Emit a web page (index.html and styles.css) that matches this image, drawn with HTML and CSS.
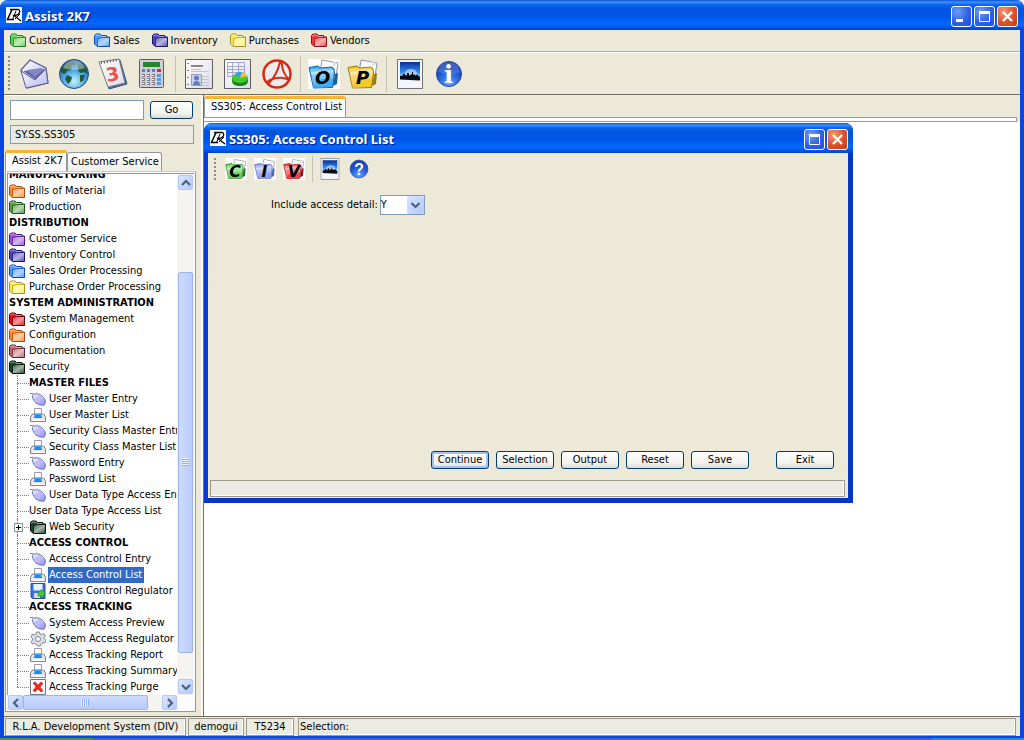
FILE: index.html
```html
<!DOCTYPE html>
<html lang="en">
<head>
<meta charset="utf-8">
<title>Assist 2K7</title>
<link rel="stylesheet" href="styles.css">
</head>
<body>
<svg class="defs" aria-hidden="true">
  <defs>
    <linearGradient id="g-shine" x1="0" y1="0" x2="1" y2="1"><stop offset="0" stop-color="#fff" stop-opacity=".2"/><stop offset=".5" stop-color="#fff" stop-opacity=".6"/><stop offset="1" stop-color="#fff" stop-opacity=".1"/></linearGradient>
    <linearGradient id="g-face" x1="0" y1="0" x2="0" y2="1"><stop offset="0" stop-color="#fff" stop-opacity=".55"/><stop offset="1" stop-color="#fff" stop-opacity=".1"/></linearGradient>
    <linearGradient id="g-mouse" x1="0" y1="0" x2="1" y2="1"><stop offset="0" stop-color="#f0f0ff"/><stop offset="1" stop-color="#8d8cf0"/></linearGradient>
    <linearGradient id="g-mail" x1="0" y1="0" x2="1" y2="1"><stop offset="0" stop-color="#fff"/><stop offset="1" stop-color="#b4b6ec"/></linearGradient>
    <linearGradient id="g-sky" x1="0" y1="0" x2="0" y2="1"><stop offset="0" stop-color="#0a2f98"/><stop offset=".55" stop-color="#2f86e8"/><stop offset="1" stop-color="#e2f4ff"/></linearGradient>
    <radialGradient id="g-sea" cx=".5" cy=".75" r=".75"><stop offset="0" stop-color="#c4f4ff"/><stop offset=".5" stop-color="#4aa4e4"/><stop offset="1" stop-color="#154f98"/></radialGradient>
    <radialGradient id="g-orb" cx=".5" cy=".9" r=".9"><stop offset="0" stop-color="#5fa2ff"/><stop offset=".6" stop-color="#1c55d0"/><stop offset="1" stop-color="#1a3fa8"/></radialGradient>
    <linearGradient id="g-paper" x1="0" y1="0" x2="1" y2="1"><stop offset="0" stop-color="#fff"/><stop offset="1" stop-color="#dcdce6"/></linearGradient>
  </defs>
  <symbol id="folder" viewBox="0 0 16 14">
    <path d="M.5 11V2.500L2 1h4l1.500 1.500h5l1 1.500h2v9.500h-12z" fill="var(--c)" stroke="var(--d)"/>
    <path d="M1.500 3.500l1-1.500h3L7 3.500h5" fill="none" stroke="#fff" opacity=".5"/>
    <path d="M4 5h11v8H4z" fill="url(#g-shine)"/>
    <path d="M3.500 12.500v-7l2 0 1.500-1h7" fill="none" stroke="var(--d)" stroke-width=".8" opacity=".8"/>
  </symbol>
  <symbol id="logo" viewBox="0 0 16 16">
    <path fill="#fff" d="M0 0h16v16H0z"/>
    <path d="M6 2.500L1.500 12.500H8" fill="none" stroke="#000" stroke-width="1.500"/>
    <path d="M4 2.500h8.500q2.500 1.500 0 4.500-1.500 1.500-4.500 1.500l7 5.500" fill="none" stroke="#000" stroke-width="1.300"/>
    <path d="M10 4L6.500 12.500M9 12l5-5" fill="none" stroke="#000"/>
  </symbol>
  <symbol id="mouse" viewBox="0 0 16 16">
    <path d="M0 2.500h3l2 2" fill="none" stroke="#85858f"/>
    <path d="M3 3.500c4-2 8 0 10.500 3 2.500 2.500 2.500 5.500 .5 7.500-3 1-8-1-10-4.500C2.500 7 1.500 5 3 3.500z" fill="url(#g-mouse)" stroke="#6f70a8"/>
    <path d="M4 8c2 .5 5-1 5.500-4.500" fill="none" stroke="#a3a4d4" stroke-width=".7"/>
  </symbol>
  <symbol id="printer" viewBox="0 0 16 16">
    <path d="M4.500 8V1.500h7V8" fill="#fff" stroke="#9a9aa4"/>
    <path d="M2.500 7h11l2 3v4.500H.500V10z" fill="#e2e2e4" stroke="#85858c"/>
    <path d="M5 6h6l1 5H4z" fill="#2089ee"/><path d="M5 6h6l.5 1.500h-7z" fill="#70c0ff"/>
    <path d="M2 12.500h12v1.500H2z" fill="#fff"/>
  </symbol>
  <symbol id="disk" viewBox="0 0 16 16">
    <path d="M1 .5h14v15H2.500L1 14z" fill="#456fd0" stroke="#2c4d9c"/>
    <path d="M3.500 1h9v6.500h-9z" fill="#dff4ff"/><path d="M4 10h6v5H4z" fill="#d4d8e0"/>
    <path d="M8 10q0-2 3-2V6.500l4.500 4-4.500 4V13h-3z" fill="#45c92c" stroke="#2b8b22" stroke-width=".6"/>
  </symbol>
  <symbol id="gear" viewBox="0 0 16 16">
    <path d="M6.500 1h3l.5 2 2 .5 2-1 1.500 2.500-1.500 1.500.5 1.500 1.500 1-1 3-2.500-.2-1.500 1.700-.5 1.500h-3L6.500 13.500l-2-1-2 .5L1 10.500 2.500 9V7.500L1 6l1.500-3 2 .8 1.500-.8z" fill="#dcdce4" stroke="#858591"/>
    <circle cx="8" cy="8" r="2.500" fill="#fff" stroke="#858591"/>
  </symbol>
  <symbol id="purge" viewBox="0 0 16 16">
    <path d="M.5.5h15v15H.5z" fill="#fff" stroke="#72727c"/>
    <path d="M3 4l2-1 3 3 3-3 2 1.500L10 8l3 3.500-2 1.500-3-3-3 3-2-1.500L6 8z" fill="#ee2e20" stroke="#b01610" stroke-width=".6"/>
  </symbol>
  <symbol id="photo" viewBox="0 0 26 30">
    <path d="M.5.5h25v29H.5z" fill="#f4f4fb" stroke="#6f6f78"/>
    <path d="M3 3h20v17.500H3z" fill="url(#g-sky)"/>
    <ellipse cx="14" cy="14" rx="6" ry="4" fill="#fff" opacity=".5"/>
    <path d="M3 20.500V17l3-.5V15h2v1.500l2-.5v-2h2v2.500l3-1.500v-2h1v3l2-1v1.500l3-1v1.500l2 .5v4z" fill="#050b14"/>
  </symbol>
  <symbol id="paperfolder" viewBox="0 0 32 30">
    <path d="M14 1l16 3-3 20-16-4z" fill="#fff" stroke="#8d95a3"/><path d="M25 2.500l5 2-5 3z" fill="#dde3ea"/>
    <path d="M1 8.500l9-1.500 2 2 12-1 2 2 .5 4-2 14.500-19 .5z" fill="var(--c)" stroke="var(--d)"/>
    <path d="M2 10l22-1 1 4-22 3z" fill="#fff" opacity=".35"/>
    <path d="M3 13l23-2-2.500 17-18.500 1z" fill="url(#g-face)"/>
    <path d="M25 27l2-12 3-1-1 11z" fill="var(--d)"/>
    <path d="M5 29q4-12 20-9l-1 8z" fill="var(--c)" opacity=".7"/>
  </symbol>
  <symbol id="chev" viewBox="0 0 10 8"><path d="M1 2l4 4 4-4" fill="none" stroke="#4d6185" stroke-width="2.200"/></symbol>
  <symbol id="x" viewBox="0 0 21 21"><path d="M6 6l9 9M15 6l-9 9" stroke="#fff" stroke-width="2.300"/></symbol>
  <symbol id="max" viewBox="0 0 21 21"><path d="M5.500 6v9.500h10V6z" fill="none" stroke="#fff"/><path d="M5 5h11v3H5z" fill="#fff"/></symbol>
  <symbol id="min" viewBox="0 0 21 21"><path d="M5 13h7v3H5z" fill="#fff"/></symbol>
</svg>

<div class="window">
  <header class="titlebar">
    <svg class="i16"><use href="#logo"/></svg><h1 class="title">Assist 2K7</h1>
    <button class="wbtn" aria-label="Minimize"><svg><use href="#min"/></svg></button>
    <button class="wbtn" aria-label="Maximize"><svg><use href="#max"/></svg></button>
    <button class="wbtn close" aria-label="Close"><svg><use href="#x"/></svg></button>
  </header>

  <nav class="menubar">
    <a href="#customers"><svg class="folder green"><use href="#folder"/></svg>Customers</a>
    <a href="#sales"><svg class="folder blue"><use href="#folder"/></svg>Sales</a>
    <a href="#inventory"><svg class="folder indigo"><use href="#folder"/></svg>Inventory</a>
    <a href="#purchases"><svg class="folder yellow"><use href="#folder"/></svg>Purchases</a>
    <a href="#vendors"><svg class="folder red"><use href="#folder"/></svg>Vendors</a>
  </nav>

  <div class="toolbar">
    <span class="grip"></span>
    <button aria-label="Mail"><svg viewBox="0 0 32 32"><path d="M2 12L11 2l16 8 2 15-21 5z" fill="url(#g-mail)" stroke="#5b5c96" stroke-width="1.200"/><path d="M4 13l22-2-9 11z" fill="#6668a8"/><path d="M8 12l14-2 3 1-9 8z" fill="#8587c4"/><path d="M2 13l14 9L27 11l2 14-22 5z" fill="url(#g-mail)" stroke="#5b5c96"/></svg></button>
    <button aria-label="Web"><svg viewBox="0 0 32 32"><circle cx="16" cy="16" r="14.500" fill="url(#g-sea)" stroke="#244a78"/><path d="M4 10q5-7 11-7l3 3-4 2-1 4-4 1-2 3-3-1-2-2zM20 5l6 2q3 4 4 9l-4-2-4 1-2-3zM9 17l5 2-1 4-3 3-3-5zM22 17l5 0-2 6-3 1z" fill="#22593c"/><path d="M5 10Q9 2 16 2t11 8Q16 14 5 10z" fill="#fff" opacity=".4"/></svg></button>
    <button aria-label="Calendar"><svg viewBox="0 0 32 32"><path d="M4 5l19-3 7 24-18 5z" fill="#3e6fae" stroke="#3c5a80"/><path d="M2 4l20-3 6 24-17 4z" fill="url(#g-paper)" stroke="#777784"/><path d="M4 5l17-3" stroke="#555" stroke-width="2" stroke-dasharray="1 2"/><text class="cal" x="9" y="23" transform="rotate(-10 16 16)">3</text></svg></button>
    <button aria-label="Calculator"><svg viewBox="0 0 32 32"><rect x="3.500" y="1.500" width="24" height="28" rx="1" fill="#cfcfda" stroke="#5c5c66"/><path d="M7 4h17v5H7z" fill="#23862c"/><path d="M6 12.500h14" stroke="#7473bb" stroke-width="3" stroke-dasharray="3 2"/><path d="M21 11h4v3h-4z" fill="#d02a36"/><path d="M6 17.500h14M6 21.500h14M6 25.500h14" stroke="#7c7c88" stroke-width="3" stroke-dasharray="3 2"/><path d="M6 17.500h14M6 21.500h14M6 25.500h14" stroke="#f4f4f8" stroke-dasharray="2 3"/><path d="M23 16v11" stroke="#5b96d8" stroke-width="4" stroke-dasharray="3 1"/></svg></button>
    <span class="sep"></span>
    <button aria-label="Contacts"><svg viewBox="0 0 32 32"><path d="M2.500 1.500h27v29h-27z" fill="url(#g-paper)" stroke="#5c5c66"/><path d="M5 5v24" stroke="#888" stroke-width="2" stroke-dasharray="1 6"/><path d="M8 8h12" stroke="#666" stroke-width="1.500"/><path d="M8 11.500h10M8 13.500h18M19 18.500h7M19 21.500h7M19 24.500h7M19 27.500h7" stroke="#c4c4ce"/><path d="M8.500 16.500h10v11h-10z" fill="#c8d2f0" stroke="#9a98b8"/><circle cx="13.500" cy="20" r="2.500" fill="#657bc0"/><path d="M10 27q0-4 3.500-4t3.500 4z" fill="#657bc0"/></svg></button>
    <button aria-label="Reports"><svg viewBox="0 0 32 32"><path d="M2.500 1.500h26v29h-26z" fill="url(#g-paper)" stroke="#5c5c66"/><path d="M5.500 4.500h17v14h-17zM10.500 4v15M16.500 4v15M5 8.500h18M5 11.500h18M5 14.500h18" fill="none" stroke="#a4a5d4"/><path d="M10 20v3q0 5 8 5t8-5v-3z" fill="#17861b"/><ellipse cx="18" cy="20" rx="8" ry="5" fill="#42c92e"/><path d="M18 20l-5-4q4-3 7-2z" fill="#389bed"/><path d="M18 20l2-6q4 1 5 4z" fill="#f0c52e"/></svg></button>
    <button aria-label="PDF"><svg viewBox="0 0 32 32"><circle cx="16" cy="16" r="13.500" fill="#ecebed" stroke="#d52c16" stroke-width="2.500"/><path d="M8 25Q16 17 19 4q1-2 1.500 0 1 12 7.500 17 1 2-2 0-8-3-17 1-4 2-1 3z" fill="none" stroke="#db2b15" stroke-width="2"/></svg></button>
    <span class="sep"></span>
    <button class="hot" aria-label="Orders"><svg class="cyan" viewBox="0 0 32 30"><use href="#paperfolder"/><text class="let" x="7" y="25">O</text></svg></button>
    <button aria-label="Purchases"><svg class="gold" viewBox="0 0 32 30"><use href="#paperfolder"/><text class="let" x="9" y="25">P</text></svg></button>
    <span class="sep"></span>
    <button aria-label="Picture"><svg viewBox="0 0 26 30"><use href="#photo"/></svg></button>
    <button aria-label="Information"><svg viewBox="0 0 32 32"><circle cx="16" cy="16" r="12.500" fill="url(#g-orb)" stroke="#2445a0"/><path d="M5 14Q6 4 16 4t11 10q-10 5-22 0z" fill="#fff" opacity=".15"/><text class="info" x="11" y="25">i</text></svg></button>
  </div>

  <div class="main">
    <aside class="side">
      <form class="go"><input type="text" aria-label="Go to program"><button type="button" class="btn">Go</button></form>
      <input class="path" type="text" value="SY.SS.SS305" aria-label="Current program" readonly>
      <div class="tabs"><button class="tab on">Assist 2K7</button><button class="tab">Customer Service</button></div>
      <div class="panel">
        <div class="tree-row">
          <ul class="tree">
            <li class="hd">MANUFACTURING</li>
            <li><svg class="folder orange"><use href="#folder"/></svg>Bills of Material</li>
            <li><svg class="folder moss"><use href="#folder"/></svg>Production</li>
            <li class="hd">DISTRIBUTION</li>
            <li><svg class="folder purple"><use href="#folder"/></svg>Customer Service</li>
            <li><svg class="folder indigo"><use href="#folder"/></svg>Inventory Control</li>
            <li><svg class="folder blue"><use href="#folder"/></svg>Sales Order Processing</li>
            <li><svg class="folder yellow"><use href="#folder"/></svg>Purchase Order Processing</li>
            <li class="hd">SYSTEM ADMINISTRATION</li>
            <li><svg class="folder crimson"><use href="#folder"/></svg>System Management</li>
            <li><svg class="folder orange"><use href="#folder"/></svg>Configuration</li>
            <li><svg class="folder rose"><use href="#folder"/></svg>Documentation</li>
            <li><svg class="folder dark"><use href="#folder"/></svg>Security</li>
            <li class="sub hd">MASTER FILES</li>
            <li class="sub"><svg class="i16"><use href="#mouse"/></svg>User Master Entry</li>
            <li class="sub"><svg class="i16"><use href="#printer"/></svg>User Master List</li>
            <li class="sub"><svg class="i16"><use href="#mouse"/></svg>Security Class Master Entry</li>
            <li class="sub"><svg class="i16"><use href="#printer"/></svg>Security Class Master List</li>
            <li class="sub"><svg class="i16"><use href="#mouse"/></svg>Password Entry</li>
            <li class="sub"><svg class="i16"><use href="#printer"/></svg>Password List</li>
            <li class="sub"><svg class="i16"><use href="#mouse"/></svg>User Data Type Access Entry</li>
            <li class="sub">User Data Type Access List</li>
            <li class="sub"><button class="plus" aria-label="Expand Web Security"><svg viewBox="0 0 9 9"><path d="M.5.5h8v8h-8z" fill="#fff" stroke="#7b8ea8"/><path d="M2 4.500h5M4.500 2v5" stroke="#000"/></svg></button><svg class="folder dark"><use href="#folder"/></svg>Web Security</li>
            <li class="sub hd">ACCESS CONTROL</li>
            <li class="sub"><svg class="i16"><use href="#mouse"/></svg>Access Control Entry</li>
            <li class="sub"><svg class="i16"><use href="#printer"/></svg><span class="sel">Access Control List</span></li>
            <li class="sub"><svg class="i16"><use href="#disk"/></svg>Access Control Regulator</li>
            <li class="sub hd">ACCESS TRACKING</li>
            <li class="sub"><svg class="i16"><use href="#mouse"/></svg>System Access Preview</li>
            <li class="sub"><svg class="i16"><use href="#gear"/></svg>System Access Regulator</li>
            <li class="sub"><svg class="i16"><use href="#printer"/></svg>Access Tracking Report</li>
            <li class="sub"><svg class="i16"><use href="#printer"/></svg>Access Tracking Summary</li>
            <li class="sub last"><svg class="i16"><use href="#purge"/></svg>Access Tracking Purge</li>
          </ul>
          <div class="vbar"><button class="arr up" aria-label="Scroll up"><svg><use href="#chev"/></svg></button><span class="vspace"></span><span class="thumb"><i></i></span><span class="vrest"></span><button class="arr" aria-label="Scroll down"><svg><use href="#chev"/></svg></button></div>
        </div>
        <div class="hbar"><button class="arr left" aria-label="Scroll left"><svg><use href="#chev"/></svg></button><span class="thumb"><i></i></span><span class="hrest"></span><button class="arr right" aria-label="Scroll right"><svg><use href="#chev"/></svg></button></div>
      </div>
    </aside>

    <section class="work">
      <div class="tabs"><button class="tab on">SS305: Access Control List</button></div>
      <div class="strip"></div>
      <div class="desk">
        <section class="dialog">
          <header class="titlebar inner">
            <svg class="i16"><use href="#logo"/></svg><h2 class="title">SS305: Access Control List</h2>
            <button class="wbtn" aria-label="Maximize dialog"><svg><use href="#max"/></svg></button>
            <button class="wbtn close" aria-label="Close dialog"><svg><use href="#x"/></svg></button>
          </header>
          <div class="body">
            <div class="toolbar small">
              <span class="grip"></span>
              <button class="hot" aria-label="Customers"><svg class="green" viewBox="0 0 32 30"><use href="#paperfolder"/><text class="let big" x="6" y="27">C</text></svg></button>
              <button class="hot" aria-label="Inventory"><svg class="lilac" viewBox="0 0 32 30"><use href="#paperfolder"/><text class="let big" x="11" y="27">I</text></svg></button>
              <button class="hot" aria-label="Vendors"><svg class="red" viewBox="0 0 32 30"><use href="#paperfolder"/><text class="let big" x="7" y="27">V</text></svg></button>
              <span class="sep"></span>
              <button aria-label="Picture"><svg viewBox="0 0 26 30"><use href="#photo"/></svg></button>
              <button aria-label="Help"><svg viewBox="0 0 32 32"><circle cx="16" cy="16" r="13" fill="url(#g-orb)" stroke="#2445a0"/><text class="help" x="9" y="24">?</text></svg></button>
            </div>
            <div class="field">
              <label for="detail">Include access detail:</label>
              <span class="combo"><select id="detail"><option>Y</option><option>N</option></select><svg><use href="#chev"/></svg></span>
            </div>
            <div class="actions">
              <button class="btn default">Continue</button><button class="btn">Selection</button><button class="btn">Output</button><button class="btn">Reset</button><button class="btn">Save</button><button class="btn exit">Exit</button>
            </div>
            <div class="message"></div>
          </div>
        </section>
      </div>
    </section>
  </div>

  <footer class="status">
    <span class="cell sys">R.L.A. Development System (DIV)</span><span class="cell user">demogui</span><span class="cell term">T5234</span><span class="cell wide">Selection:</span>
  </footer>
</div>
<div class="taskbar"></div>
</body>
</html>
```
FILE: styles.css
```css
* { box-sizing: border-box; }
body {
  margin: 0;
  height: 100vh;
  display: flex;
  flex-direction: column;
  overflow: hidden;
  background: #fff;
  color: #000;
  font: 11px/16px "DejaVu Sans Condensed", "DejaVu Sans", sans-serif;
}
button, input, select { font: inherit; color: inherit; margin: 0; padding: 0; }
button { background: none; border: 0; }
svg { display: block; flex: none; overflow: visible; }
.defs { position: absolute; width: 0; height: 0; }
.i16 { width: 16px; height: 16px; }
.folder { width: 16px; height: 14px; }

.green { --c: #62cf4c; --d: #1d7a22; }
.blue { --c: #4e9af2; --d: #0b48b8; }
.indigo { --c: #5144b4; --d: #1c1768; }
.yellow { --c: #f6ec56; --d: #a89222; }
.red { --c: #ee3a3c; --d: #8c1016; }
.orange { --c: #f88a2c; --d: #a8480c; }
.moss { --c: #559c45; --d: #22501c; }
.purple { --c: #a04fd8; --d: #4d1a80; }
.crimson { --c: #e40c14; --d: #560408; }
.rose { --c: #b8686c; --d: #5a2232; }
.dark { --c: #1f4428; --d: #06150a; }
.cyan { --c: #36a9f2; --d: #1660a8; }
.gold { --c: #f4c41c; --d: #9c7a10; }
.lilac { --c: #8f9cf0; --d: #5560b8; }

.window {
  flex: 1;
  min-height: 0;
  display: flex;
  flex-direction: column;
  border: solid #0a46e4;
  border-width: 0 4px 2px;
  border-radius: 8px 8px 0 0;
  background: #ece9d8;
}
.taskbar { height: 2px; background: linear-gradient(90deg, #3c9a3c 93px, #2b68e0 93px 91%, #1492ea 91%); }

.titlebar {
  flex: none;
  height: 30px;
  margin: 0 -4px;
  padding: 2px 6px 0;
  display: flex;
  align-items: center;
  gap: 2px;
  border-radius: 8px 8px 0 0;
  background: linear-gradient(#0a4fd8 0, #3c92ff 2px, #0a62ec 5px, #0054e0 9px, #0055e6 16px, #0466fc 23px, #0260f8 26px, #0040c8 30px);
}
.titlebar .i16 { margin-bottom: 2px; }
.title {
  flex: 1;
  margin: 0 0 0 1px;
  color: #fff;
  font: bold 13px/16px "Noto Sans", sans-serif;
  text-shadow: 1px 1px 1px #0a1883;
}
.wbtn {
  width: 21px;
  height: 21px;
  border: 1px solid #fff;
  border-radius: 3px;
  background: radial-gradient(circle at 30% 25%, #6f9df4, #2e61e4 55%, #2250d4);
}
.wbtn svg { width: 21px; height: 21px; margin: -1px; }
.wbtn.close { background: radial-gradient(circle at 30% 25%, #f09a7c, #dc5128 55%, #c63c12); }

.menubar {
  flex: none;
  height: 22px;
  padding: 0 6px;
  display: flex;
  align-items: center;
  gap: 12px;
  border-bottom: 1px solid #aca899;
}
.menubar a { display: flex; gap: 3px; color: #000; text-decoration: none; }

.toolbar {
  flex: none;
  height: 43px;
  padding: 0 4px;
  display: flex;
  align-items: center;
  gap: 7px;
  border-top: 1px solid #fff;
  border-bottom: 1px solid #716f64;
}
.toolbar svg { width: 32px; height: 32px; }
.toolbar svg[viewBox$=" 30"] { height: 30px; }
.toolbar .hot { background: #fff; }
.grip { width: 2px; height: 35px; margin-right: 2px; background: repeating-linear-gradient(#8f8d80 0 2px, transparent 2px 4px); }
.sep { width: 1px; height: 36px; background: #c5c2b2; }
.cal { font: bold 19px "DejaVu Sans"; fill: #f0524c; }
.let { font: italic bold 18px "DejaVu Sans"; fill: #000; }
.let.big { font-size: 23px; }
.info { font: bold 24px "DejaVu Serif"; fill: #fff; }
.help { font: bold 23px "Liberation Sans"; fill: #fff; }

.main { flex: 1; min-height: 0; display: flex; }
.side {
  width: 199px;
  flex: none;
  padding: 4px 5px 4px 1px;
  display: flex;
  flex-direction: column;
  border-top: 1px solid #fff;
  border-right: 2px solid #fbfaf4;
}
.go { display: flex; align-items: center; gap: 6px; padding-left: 5px; }
.go input, .path { height: 20px; border: 1px solid #7f9db9; background: #fff; padding: 0 4px; }
.go input { flex: 1; min-width: 0; }
.go .btn { width: 43px; margin-right: 3px; }
.path { height: 19px; margin: 5px 2px 0 5px; background: #ebebe4; }
.btn {
  width: 58px;
  height: 18px;
  line-height: 16px;
  border: 1px solid #003c74;
  border-radius: 3px;
  background: linear-gradient(#fff, #f3f2ec 70%, #dcd8cc);
}
.btn.default { box-shadow: inset 0 0 0 2px #a5c0f2; }
.tabs { display: flex; align-items: flex-end; height: 21px; }
.side .tabs { margin-top: 6px; }
.tab {
  height: 19px;
  padding: 0 2px 0 3px;
  border: 1px solid #919b9c;
  border-bottom: 0;
  border-radius: 3px 3px 0 0;
  background: linear-gradient(#fff, #f0efe8);
  white-space: nowrap;
}
.tab.on { height: 21px; padding: 0 3px 2px 6px; border-top: 3px solid #fdb32f; background: #fcfcfe; }
.panel {
  flex: 1;
  min-height: 0;
  display: flex;
  flex-direction: column;
  padding: 1px;
  border: 1px solid #919b9c;
  border-top-color: #c8cccc;
  background: #fcfcfe;
}
.tree-row { flex: 1; min-height: 0; display: flex; border-top: 1px solid #7f9db9; border-left: 1px solid #7f9db9; background: #fff; }
.tree { flex: 1; min-width: 0; margin: 0; padding: 0 0 0 1px; list-style: none; overflow: hidden; display: flex; flex-direction: column; justify-content: flex-end; }
.tree li { flex: none; height: 16px; display: flex; align-items: center; gap: 4px; white-space: nowrap; }
.tree .hd { font-weight: bold; }
.tree .sub { position: relative; padding-left: 20px; gap: 3px; }
.tree .sub svg { margin-left: 1px; }
.tree .sub::before { content: ""; position: absolute; left: 8px; top: 0; height: 16px; border-left: 1px dotted #808080; }
.tree .sub::after { content: ""; position: absolute; left: 8px; top: 8px; width: 12px; border-top: 1px dotted #808080; }
.tree .last::before { height: 8px; }
.plus { position: absolute; left: 4px; top: 4px; z-index: 1; }
.plus svg { width: 9px; height: 9px; }
.sel { background: #316ac5; color: #fff; padding: 0 2px 0 1px; margin-left: -1px; }

.vbar { width: 17px; padding: 1px; display: flex; flex-direction: column; background: #f5f4f0; }
.hbar { flex: none; height: 15px; display: flex; margin-right: 16px; padding: 0 1px; background: #f5f4f0; }
.arr { flex: none; width: 15px; height: 15px; display: grid; place-items: center; border: 1px solid #b4c8f6; border-radius: 2px; background: linear-gradient(135deg, #dce7ff, #b4c8f8); }
.arr svg { width: 10px; height: 8px; }
.up svg { transform: rotate(180deg); }
.left svg { transform: rotate(90deg); }
.right svg { transform: rotate(-90deg); }
.vspace { flex: 82; }
.vrest { flex: 26; }
.thumb { display: grid; place-items: center; border: 1px solid #9cb4ea; border-radius: 2px; background: #c6d5fd; }
.vbar .thumb { flex: 380; background: linear-gradient(90deg, #cddbff, #b9cbf9); }
.hbar .thumb { flex: 122; background: linear-gradient(#cddbff, #b9cbf9); }
.hrest { flex: 14; }
.vbar i { width: 7px; height: 8px; background: repeating-linear-gradient(#eef4ff 0 1px, #8cb0f8 1px 2px); }
.hbar i { width: 8px; height: 7px; background: repeating-linear-gradient(90deg, #eef4ff 0 1px, #8cb0f8 1px 2px); }

.work { flex: 1; min-width: 0; display: flex; flex-direction: column; border-left: 1px solid #716f64; }
.work .tabs { flex: none; margin-top: 1px; }
.strip { flex: none; height: 5px; margin: 0 3px 0 0; border: 1px solid #919b9c; border-left: 0; background: #fcfcfe; }
.desk { flex: 1; min-height: 0; position: relative; background: #fff; }
.dialog {
  position: absolute;
  left: 0;
  top: 1px;
  width: 649px;
  height: 380px;
  display: flex;
  flex-direction: column;
  border: solid #0a3cdc;
  border-width: 0 5px 5px 4px;
  border-right-color: #0434c8;
  border-bottom-color: #0434c8;
  border-radius: 8px 8px 0 0;
  background: #ece9d8;
}
.inner { margin-right: -5px; padding-right: 5px; padding-left: 6px; }
.work .body { flex: 1; display: flex; flex-direction: column; padding: 0 3px 1px 2px; }
.small { height: 32px; border: 0; gap: 7px; padding-left: 4px; }
.small svg, .small svg[viewBox$=" 30"] { width: 22px; height: 22px; }
.small .grip { height: 23px; }
.small .sep { height: 26px; margin-right: -1px; }
.field { display: flex; align-items: center; gap: 2px; margin-top: 10px; padding-left: 61px; }
.combo { position: relative; width: 45px; height: 20px; }
.combo select { width: 45px; height: 20px; appearance: none; border: 1px solid #7f9db9; background: #fff; }
.combo svg { position: absolute; right: 1px; top: 1px; width: 17px; height: 18px; padding: 5px 3px; border-radius: 2px; background: linear-gradient(135deg, #d8e4ff, #b4c8f8); pointer-events: none; }
.actions { margin-top: auto; display: flex; justify-content: flex-end; gap: 7px; padding: 0 11px 11px 0; }
.exit { margin-left: 20px; }
.message { height: 17px; border: 1px solid #9d9a8c; background: #ebebe4; box-shadow: inset -1px -1px #fff; }

.status { flex: none; height: 20px; display: flex; gap: 2px; padding: 1px 4px 0 1px; border-top: 1px solid #716f64; }
.cell { border: 1px solid #9d9a8c; background: #ebebe4; text-align: center; line-height: 16px; box-shadow: inset -1px -1px #fff; white-space: nowrap; }
.sys { width: 181px; }
.user { width: 56px; }
.term { width: 48px; }
.wide { flex: 1; margin-left: 2px; padding-left: 1px; text-align: left; }
```
